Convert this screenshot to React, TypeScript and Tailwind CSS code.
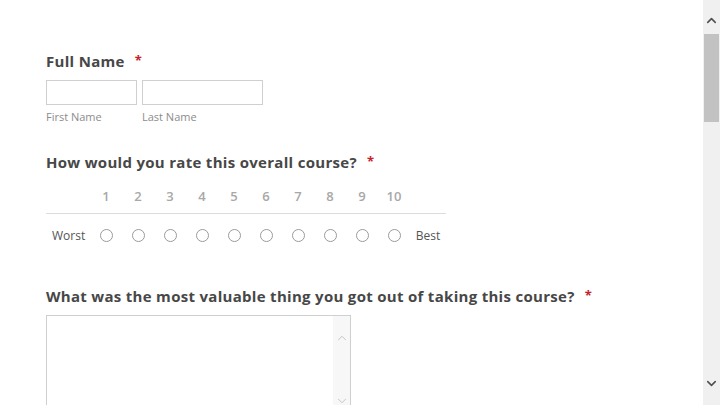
import { ChevronUp, ChevronDown } from 'lucide-react';

const scale = [1, 2, 3, 4, 5, 6, 7, 8, 9, 10];

function Label({ text }: { text: string }) {
  return (
    <div className="flex items-center h-5 text-[15px] font-bold text-[#474747] tracking-[0.3px]">
      {text}
      <span className="ml-[10px] text-[#c4232a] text-[13px]">*</span>
    </div>
  );
}

function Radio() {
  return <span className="block w-[13px] h-[13px] rounded-full border border-[#9a9a9a] bg-white" />;
}

export default function App() {
  return (
    <div
      className="flex w-[720px] h-[405px] overflow-hidden bg-white"
      style={{ fontFamily: '"Open Sans", "DejaVu Sans", sans-serif' }}
    >
      <main className="flex-1 pl-[46px] pt-[51px]">
        {/* full name */}
        <Label text="Full Name" />
        <div className="flex gap-[5px] mt-[9px]">
          <div className="flex flex-col">
            <div className="w-[91px] h-[25px] border border-[#cfcfcf]" />
            <span className="text-[11px] text-[#8c8c8c] mt-[4px] leading-4">First Name</span>
          </div>
          <div className="flex flex-col">
            <div className="w-[121px] h-[25px] border border-[#cfcfcf]" />
            <span className="text-[11px] text-[#8c8c8c] mt-[4px] leading-4">Last Name</span>
          </div>
        </div>

        {/* rating */}
        <div className="mt-[27px]">
          <Label text="How would you rate this overall course?" />
          <div className="w-[400px] mt-[11px]">
            <div className="flex h-[31px] items-center border-b border-[#dcdcdc] pb-[2px]">
              <span className="w-[44px]" />
              {scale.map((n) => (
                <span key={n} className="w-[32px] text-center text-[13px] font-semibold text-[#a8a8a8]">
                  {n}
                </span>
              ))}
              <span className="w-[36px]" />
            </div>
            <div className="flex h-[43px] items-center">
              <span className="w-[44px] text-[12px] text-[#555] pl-[6px]">Worst</span>
              {scale.map((n) => (
                <span key={n} className="w-[32px] flex justify-center">
                  <Radio />
                </span>
              ))}
              <span className="w-[36px] text-[12px] text-[#555] text-center">Best</span>
            </div>
          </div>
        </div>

        {/* valuable */}
        <div className="mt-[29px]">
          <Label text="What was the most valuable thing you got out of taking this course?" />
          <div className="mt-[9px] w-[305px] h-[100px] border border-[#cfcfcf] flex justify-end">
            <div className="w-[17px] bg-[#f7f7f7] flex flex-col items-center justify-between pt-[15px] pb-[6px] text-[#bdbdbd]">
              <ChevronUp size={14} strokeWidth={1.5} />
              <ChevronDown size={14} strokeWidth={1.5} />
            </div>
          </div>
        </div>
      </main>

      {/* page scrollbar */}
      <div className="w-[17px] bg-[#f0f0f0] flex flex-col items-center text-[#505050]">
        <div className="h-[34px] flex items-center justify-center pt-[6px]">
          <ChevronUp size={15} strokeWidth={2.5} />
        </div>
        <div className="w-[15px] h-[88px] bg-[#c2c2c2]" />
        <div className="flex-1" />
        <div className="h-[40px] flex items-start justify-center pt-[11px]">
          <ChevronDown size={15} strokeWidth={2.5} />
        </div>
      </div>
    </div>
  );
}
